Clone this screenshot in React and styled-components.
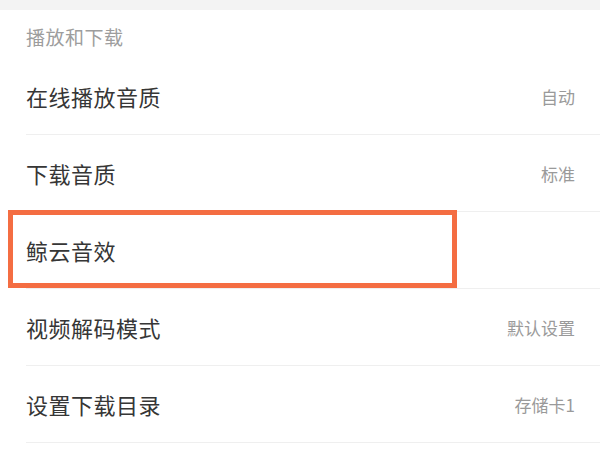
import styled, { createGlobalStyle } from "styled-components";

const GlobalStyle = createGlobalStyle`
  html, body {
    margin: 0;
    padding: 0;
    background: #ffffff;
  }
  body {
    font-family: "Noto Sans CJK SC", "Noto Sans", sans-serif;
  }
`;

const ITEMS = [
  { id: "quality", label: "在线播放音质", value: "自动" },
  { id: "download", label: "下载音质", value: "标准" },
  { id: "effect", label: "鲸云音效", value: "", marked: true },
  { id: "decode", label: "视频解码模式", value: "默认设置" },
  { id: "dir", label: "设置下载目录", value: "存储卡1" },
];

export default function App() {
  return (
    <Page>
      <GlobalStyle />
      <TopStrip />
      <Section>
        <SectionTitle>播放和下载</SectionTitle>
        <List>
          {ITEMS.map((it) => (
            <Row key={it.id}>
              <Label>{it.label}</Label>
              {it.value && <Value>{it.value}</Value>}
              {it.marked && <Highlight />}
            </Row>
          ))}
        </List>
      </Section>
    </Page>
  );
}

/* ================= styles ================= */

const Page = styled.div`
  width: 600px;
  height: 450px;
  overflow: hidden;
  background: #ffffff;
`;

const TopStrip = styled.div`
  height: 10px;
  background: #f3f3f3;
`;

const Section = styled.section`
  background: #ffffff;
`;

const SectionTitle = styled.div`
  height: 48px;
  box-sizing: border-box;
  padding: 4px 26px 0;
  display: flex;
  align-items: center;
  font-size: 19px;
  color: #9d9d9d;
  letter-spacing: 0.5px;
`;

const List = styled.div`
  display: flex;
  flex-direction: column;
`;

const Row = styled.div`
  position: relative;
  height: 76px;
  margin-left: 26px;
  padding-right: 25px;
  display: flex;
  align-items: center;
  justify-content: space-between;
  border-bottom: 1.5px solid #efefef;
`;

const Label = styled.div`
  font-size: 22px;
  color: #363636;
  letter-spacing: 0.5px;
`;

const Value = styled.div`
  font-size: 17px;
  color: #9a9a9a;
`;

const Highlight = styled.div`
  position: absolute;
  left: -18px;
  top: -2px;
  width: 449px;
  height: 78px;
  box-sizing: border-box;
  border: 5px solid #f46d42;
  pointer-events: none;
`;
